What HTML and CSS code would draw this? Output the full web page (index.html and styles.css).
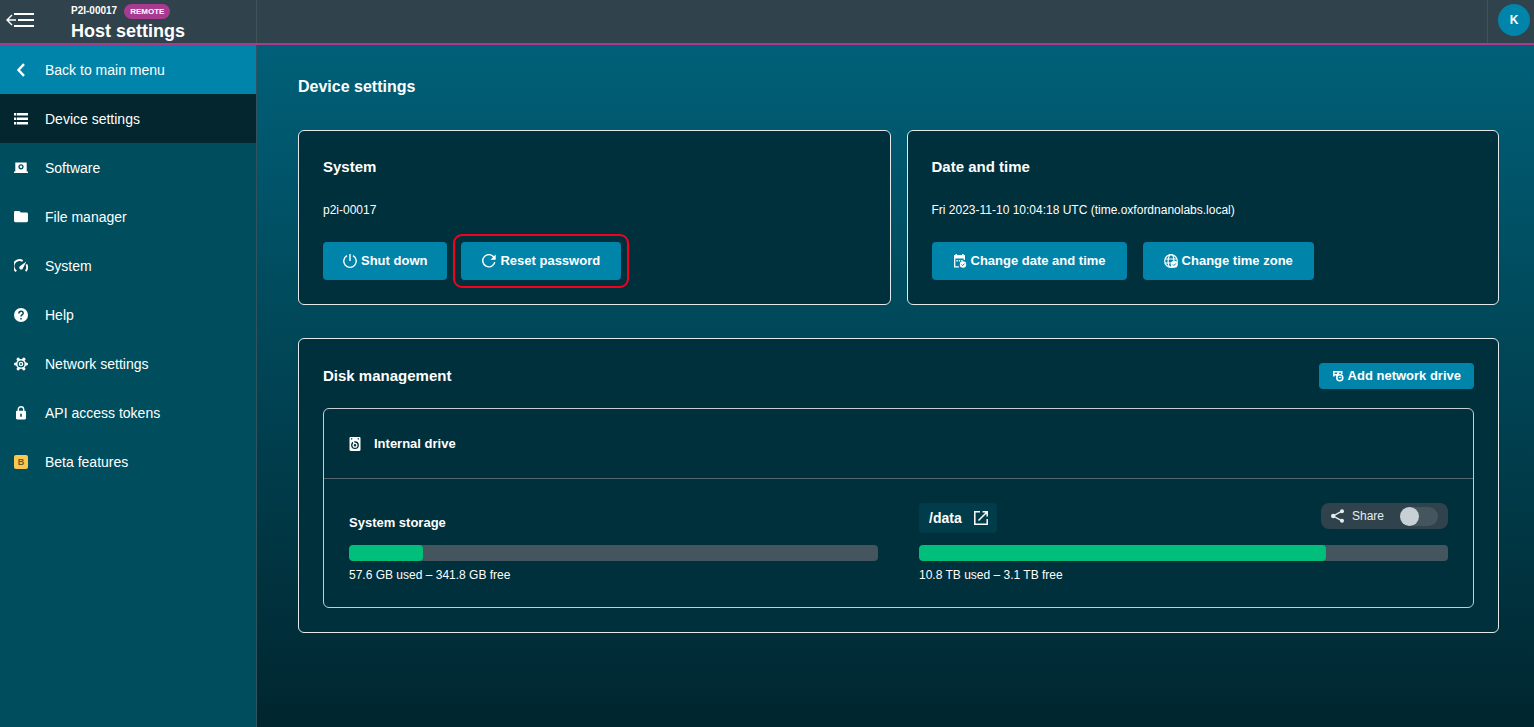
FILE: index.html
```html
<!DOCTYPE html>
<html lang="en">
<head>
<meta charset="utf-8">
<title>Host settings</title>
<link rel="stylesheet" href="styles.css">
</head>
<body>
<header class="topbar">
  <div class="topbar-left">
    <button class="menu-toggle" aria-label="Collapse menu">
      <svg width="28" height="16" viewBox="0 0 28 16" fill="none" stroke="currentColor"><path d="M8 2H28M12 8H28M8 14H28" stroke-width="2"/><path d="M1 8H10M6 3 1 8l5 5" stroke-width="1.400"/></svg>
    </button>
    <div class="host">
      <div class="host-line"><span class="host-id">P2I-00017</span><span class="badge">REMOTE</span></div>
      <div class="host-title">Host settings</div>
    </div>
  </div>
  <div class="topbar-right"><button class="avatar" aria-label="Account">K</button></div>
</header>
<div class="layout">
  <nav class="sidebar">
    <a class="nav-item nav-back" href="#"><svg class="nav-icon" viewBox="0 0 14 14"><path d="M10 1.200 4.500 7l5.500 5.800" fill="none" stroke="currentColor" stroke-width="2.400"/></svg>Back to main menu</a>
    <a class="nav-item nav-active" href="#"><svg class="nav-icon" viewBox="0 0 14 14" fill="currentColor"><path d="M0 1h2v2.600H0zM2.700 1H14v2.600H2.700zM0 5.500h2v2.600H0zM2.700 5.500H14v2.600H2.700zM0 10h2v2.600H0zM2.700 10H14v2.600H2.700z"/></svg>Device settings</a>
    <a class="nav-item" href="#"><svg class="nav-icon" viewBox="0 0 14 14"><path fill="currentColor" fill-rule="evenodd" d="M1.300 1.500h11.400v9H14V12H0v-1.500h1.300zM7 3.200a2.600 2.600 0 1 0 0 5.200 2.600 2.600 0 0 0 0-5.200zm0 1.300a1.300 1.300 0 1 1 0 2.600 1.300 1.300 0 0 1 0-2.600z"/></svg>Software</a>
    <a class="nav-item" href="#"><svg class="nav-icon" viewBox="0 0 14 14"><path fill="currentColor" d="M1.400 1h4l1.500 1.500h5.700A1.400 1.400 0 0 1 14 3.900v6.900a1.400 1.400 0 0 1-1.400 1.400H1.400A1.400 1.400 0 0 1 0 10.800V2.400A1.400 1.400 0 0 1 1.400 1z"/></svg>File manager</a>
    <a class="nav-item" href="#"><svg class="nav-icon" viewBox="0 0 14 14"><path d="M2.300 12.200A6 6 0 0 1 8.700 2M12.300 5.400a6 6 0 0 1-.6 6.800" fill="none" stroke="currentColor" stroke-width="1.900"/><path fill="currentColor" d="M12.300 2.500 8.700 9.700a1.900 1.900 0 1 1-3.100-2.200z"/></svg>System</a>
    <a class="nav-item" href="#"><svg class="nav-icon" viewBox="0 0 14 14"><circle cx="7" cy="7" r="7" fill="currentColor"/><path d="M4.800 5.400C4.900 2.400 9.200 2.500 9.200 5.200 9.200 6.700 7 6.700 7 8.600M7 9.900v1.600" fill="none" stroke="#004e5d" stroke-width="1.500"/></svg>Help</a>
    <a class="nav-item" href="#"><svg class="nav-icon" viewBox="0 0 14 14" fill="none" stroke="currentColor"><circle cx="7" cy="7" r="4.300" stroke-width="1.600"/><circle cx="7" cy="7" r="1.600" stroke-width="1.300"/><g fill="currentColor" stroke="none"><circle cx="1.500" cy="7" r="1.500"/><circle cx="12.500" cy="7" r="1.500"/><circle cx="4.200" cy="2.200" r="1.600"/><circle cx="9.800" cy="2.200" r="1.600"/><circle cx="4.200" cy="11.800" r="1.600"/><circle cx="9.800" cy="11.800" r="1.600"/></g></svg>Network settings</a>
    <a class="nav-item" href="#"><svg class="nav-icon" viewBox="0 0 14 14"><path d="M4.300 6V3.400a2.700 2.700 0 0 1 5.400 0V6" fill="none" stroke="currentColor" stroke-width="1.400"/><path fill="currentColor" fill-rule="evenodd" d="M3.200 4.800h7.600c.7 0 1.200.5 1.200 1.200v6.300c0 .7-.5 1.200-1.200 1.200H3.200c-.7 0-1.200-.5-1.200-1.200V6c0-.7.500-1.200 1.200-1.200zM6.200 7.700v3.100h1.600V7.700z"/></svg>API access tokens</a>
    <a class="nav-item" href="#"><span class="beta-icon">B</span>Beta features</a>
  </nav>
  <main class="content">
    <h1 class="page-title">Device settings</h1>
    <div class="card-row">
      <section class="card">
        <h2 class="card-title">System</h2>
        <p class="card-info">p2i-00017</p>
        <div class="actions actions-system">
          <button class="btn btn-power"><svg width="14" height="14" viewBox="0 0 14 14" fill="none" stroke="currentColor" stroke-width="1.400"><path d="M7 0v7M4 1.700a6.200 6.200 0 1 0 6 0"/></svg>Shut down</button>
          <div class="highlight"><button class="btn"><svg width="14" height="14" viewBox="0 0 14 14"><path d="M12.800 8.200A6.100 6.100 0 1 1 11.700 3" fill="none" stroke="currentColor" stroke-width="1.400"/><path fill="currentColor" d="M13.700.5v5.200H8.500z"/></svg>Reset password</button></div>
        </div>
      </section>
      <section class="card">
        <h2 class="card-title">Date and time</h2>
        <p class="card-info">Fri 2023-11-10 10:04:18 UTC (time.oxfordnanolabs.local)</p>
        <div class="actions">
          <button class="btn"><svg width="14" height="14" viewBox="0 0 14 14"><path d="M6 12.800H1.700V2.200h9.600V6" fill="none" stroke="currentColor" stroke-width="1.300"/><path fill="currentColor" d="M1 1.300h11v3.200H1zM2.500 0h1.600v2H2.500zM9 0h1.600v2H9zM3.400 6h1.400v1.400H3.400zM5.800 6h1.400v1.400H5.800zM8.200 6h1.400v1.400H8.200z"/><circle cx="10" cy="10.500" r="3.200" fill="currentColor"/><path d="m8.500 10.500 1.100 1.100 2-2.100" fill="none" stroke="#0084a9" stroke-width="1"/></svg>Change date and time</button>
          <button class="btn"><svg width="14" height="14" viewBox="0 0 14 14" fill="none" stroke="currentColor" stroke-width="1.200"><circle cx="7" cy="7" r="6.300"/><ellipse cx="7" cy="7" rx="2.900" ry="6.300"/><path d="M.8 5h12.400M.8 9h7"/><circle cx="10.300" cy="10.300" r="3.500" fill="currentColor" stroke="none"/><path d="m8.800 10.400 1.100 1.100 2-2.100" stroke="#0084a9" stroke-width="1"/></svg>Change time zone</button>
        </div>
      </section>
    </div>
    <section class="card disk-card">
      <div class="disk-head">
        <h2 class="card-title">Disk management</h2>
        <button class="btn btn-small"><svg width="12" height="12" viewBox="0 0 12 12" fill="none" stroke="currentColor" stroke-width="1.600"><path d="M1 1.800h9.500M1 4.800h4.500M1.800 1v5.500M9.700 1v3"/><path d="m7 2-2.500 4"/><circle cx="7.800" cy="7.800" r="3"/><path d="M6.800 7.500h2.500" stroke-width="1.200"/></svg>Add network drive</button>
      </div>
      <div class="drive">
        <div class="drive-head">
          <svg width="12" height="14" viewBox="0 0 12 14"><path fill="currentColor" fill-rule="evenodd" d="M1.700 0h8.600C11 0 11.500.5 11.500 1.200v11.600c0 .7-.5 1.200-1.200 1.200H1.700C1 14 .5 13.500.5 12.800V1.200C.5.500 1 0 1.700 0zM2 1.200v1.300h1.300V1.200zM8.700 1.200v1.300H10V1.200zM6 4.200a3.900 3.900 0 1 0 0 7.800 3.900 3.900 0 0 0 0-7.800z"/><circle cx="6" cy="8.200" r="1.900" fill="none" stroke="currentColor" stroke-width="1.300"/><path d="M3.800 3.500 5.500 7" stroke="currentColor" stroke-width="1.500"/></svg>
          <h3 class="drive-title">Internal drive</h3>
        </div>
        <div class="drive-body">
          <div class="volume">
            <div class="volume-head"><h4 class="volume-title">System storage</h4></div>
            <div class="meter"><div class="meter-fill" style="width:14%"></div></div>
            <p class="usage">57.6 GB used – 341.8 GB free</p>
          </div>
          <div class="volume">
            <div class="volume-head">
              <a class="path-link" href="#">/data<svg width="14" height="14" viewBox="0 0 14 14" fill="none" stroke="currentColor" stroke-width="1.500"><path d="M6 .8H.8v12.400h12.400V8M8.500.8h4.700v4.700M13 1 4.500 9.500"/></svg></a>
              <label class="share"><svg width="13" height="14" viewBox="0 0 13 14"><path d="M11 2.200 2.200 7 11 11.800" fill="none" stroke="currentColor" stroke-width="1.400"/><g fill="currentColor"><circle cx="11" cy="2.200" r="2"/><circle cx="2.200" cy="7" r="2.200"/><circle cx="11" cy="11.800" r="2"/></g></svg><span>Share</span><input class="switch" type="checkbox" role="switch"></label>
            </div>
            <div class="meter"><div class="meter-fill" style="width:77%"></div></div>
            <p class="usage">10.8 TB used – 3.1 TB free</p>
          </div>
        </div>
      </div>
    </section>
  </main>
</div>
</body>
</html>
```
FILE: styles.css
```css
* { box-sizing: border-box; }
body {
  margin: 0;
  min-height: 100vh;
  display: flex;
  flex-direction: column;
  font-family: "Liberation Sans", Arial, sans-serif;
  font-size: 14px;
  line-height: 20px;
  color: #fff;
}
h1, h2, h3, h4, p { margin: 0; }
h1 { font-size: 16px; line-height: 24px; }
h2 { font-size: 15px; line-height: 24px; }
h3, h4 { font-size: 13px; line-height: 20px; }
button { font: inherit; color: inherit; border: 0; padding: 0; background: none; cursor: pointer; }
a { color: inherit; text-decoration: none; }
svg { flex: none; display: block; }

.topbar {
  display: flex;
  justify-content: space-between;
  height: 45px;
  background: #30434c;
  border-bottom: 2px solid #a83b8f;
}
.topbar-left {
  display: flex;
  width: 257px;
  border-right: 1px solid #40525a;
}
.menu-toggle { width: 71px; padding: 0 0 4px 6px; }
.host-line { display: flex; align-items: center; gap: 7px; height: 22px; font-size: 10px; font-weight: bold; }
.badge {
  padding: 0 6px;
  font-size: 8px;
  line-height: 15px;
  border-radius: 8px;
  background: #a83b8f;
}
.host-title { font-size: 18px; line-height: 18px; font-weight: bold; }
.topbar-right {
  display: flex;
  align-items: center;
  padding: 0 4px 4px 10px;
  border-left: 1px solid #40525a;
}
.avatar {
  width: 32px;
  height: 32px;
  border-radius: 50%;
  background: #0084a9;
  font-size: 12px;
  font-weight: bold;
}

.layout { flex: 1; display: flex; }
.sidebar {
  flex: none;
  width: 257px;
  background: #004e5d;
  border-right: 1px solid #30535e;
}
.nav-item { display: flex; align-items: center; gap: 17px; height: 49px; padding: 0 14px; }
.nav-icon { width: 14px; height: 14px; }
.nav-back { background: #0084a9; }
.nav-active { background: #04262e; }
.beta-icon {
  width: 14px;
  border-radius: 2px;
  background: #f8c850;
  color: #6b5a28;
  font-size: 9px;
  line-height: 14px;
  font-weight: bold;
  text-align: center;
}

.content {
  flex: 1;
  min-width: 0;
  padding: 30px 35px 30px 41px;
  background: linear-gradient(#006078, #00262f);
}
.page-title { margin-bottom: 31px; }
.card-row { display: grid; grid-template-columns: 1fr 1fr; gap: 16px; margin-bottom: 33px; }
.card {
  padding: 24px;
  border: 1px solid #e4eaec;
  border-radius: 6px;
  background: #00303c;
}
.card-info { margin: 21px 0 22px; font-size: 12px; }
.actions { display: flex; gap: 16px; }
.actions-system { gap: 14px; }
.btn {
  display: flex;
  align-items: center;
  gap: 4px;
  height: 38px;
  padding: 0 21px;
  border-radius: 4px;
  background: #0084a9;
  font-size: 13px;
  font-weight: bold;
  white-space: nowrap;
}
.btn-power { padding: 0 20px; }
.btn-small { height: 26px; padding: 0 13px; }
.highlight { position: relative; }
.highlight::after {
  content: "";
  position: absolute;
  inset: -8px;
  border: 2px solid #f5001d;
  border-radius: 9px;
  pointer-events: none;
}

.disk-head { display: flex; align-items: center; justify-content: space-between; margin-bottom: 19px; }
.drive { border: 1px solid #c3cfd3; border-radius: 6px; }
.drive-head {
  display: flex;
  align-items: center;
  gap: 13px;
  height: 70px;
  padding: 0 25px;
  border-bottom: 1px solid #56666e;
}
.drive-body { display: grid; grid-template-columns: 1fr 1fr; gap: 41px; padding: 24px 25px 22px; }
.volume-head { display: flex; align-items: flex-start; justify-content: space-between; height: 42px; }
.volume-title { padding-top: 10px; }
.path-link {
  display: flex;
  align-items: center;
  gap: 12px;
  height: 30px;
  padding: 0 9px 0 10px;
  border-radius: 4px;
  background: #003c49;
  font-weight: bold;
}
.share {
  display: flex;
  align-items: center;
  height: 26px;
  padding: 0 10px;
  border-radius: 8px;
  background: #30434c;
  font-size: 12px;
  color: #e8edef;
}
.share span { margin: 0 16px 0 8px; }
.switch {
  appearance: none;
  width: 38px;
  height: 19px;
  margin: 0;
  border-radius: 10px;
  background: #44555e;
}
.switch::before {
  content: "";
  display: block;
  width: 19px;
  height: 19px;
  border-radius: 50%;
  background: #c7d0d5;
}
.switch:checked::before { margin-left: auto; }
.meter { height: 16px; border-radius: 4px; background: #44555e; overflow: hidden; }
.meter-fill { height: 100%; border-radius: 4px; background: #00bf7a; }
.usage { margin-top: 4px; font-size: 12px; }
```
